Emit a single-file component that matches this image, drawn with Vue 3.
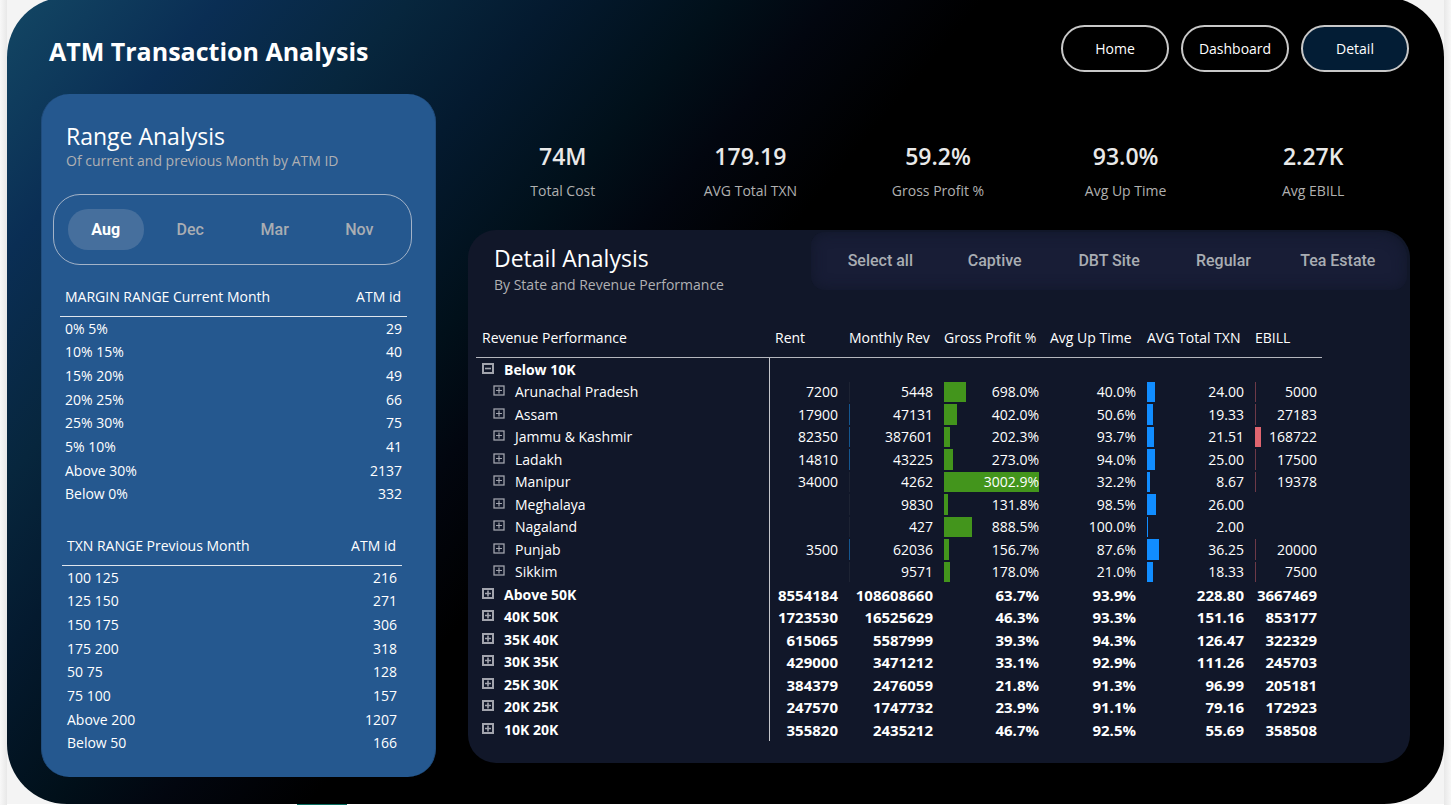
<script setup>
import { ref } from 'vue'

const pages = ['Home', 'Dashboard', 'Detail']
const activePage = ref('Detail')

const months = ['Aug', 'Dec', 'Mar', 'Nov']
const activeMonth = ref('Aug')

const siteTypes = ['Select all', 'Captive', 'DBT Site', 'Regular', 'Tea Estate']

const kpis = [
  { value: '74M', label: 'Total Cost' },
  { value: '179.19', label: 'AVG Total TXN' },
  { value: '59.2%', label: 'Gross Profit %' },
  { value: '93.0%', label: 'Avg Up Time' },
  { value: '2.27K', label: 'Avg EBILL' }
]

const rangeTables = [
  {
    id: 'margin',
    title: 'MARGIN RANGE Current Month',
    rows: [
      ['0% 5%', 29],
      ['10% 15%', 40],
      ['15% 20%', 49],
      ['20% 25%', 66],
      ['25% 30%', 75],
      ['5% 10%', 41],
      ['Above 30%', 2137],
      ['Below 0%', 332]
    ]
  },
  {
    id: 'txn',
    title: 'TXN RANGE Previous Month',
    rows: [
      ['100 125', 216],
      ['125 150', 271],
      ['150 175', 306],
      ['175 200', 318],
      ['50 75', 128],
      ['75 100', 157],
      ['Above 200', 1207],
      ['Below 50', 166]
    ]
  }
]

const columns = ['Rent', 'Monthly Rev', 'Gross Profit %', 'Avg Up Time', 'AVG Total TXN', 'EBILL']

const state = (name, ...cells) => ({ name, cells, child: true })
const group = (name, ...cells) => ({ name, cells, child: false })

const matrix = [
  { ...group('Below 10K', '', '', '', '', '', ''), open: true },
  state('Arunachal Pradesh', '7200', '5448', '698.0%', '40.0%', '24.00', '5000'),
  state('Assam', '17900', '47131', '402.0%', '50.6%', '19.33', '27183'),
  state('Jammu & Kashmir', '82350', '387601', '202.3%', '93.7%', '21.51', '168722'),
  state('Ladakh', '14810', '43225', '273.0%', '94.0%', '25.00', '17500'),
  state('Manipur', '34000', '4262', '3002.9%', '32.2%', '8.67', '19378'),
  state('Meghalaya', '', '9830', '131.8%', '98.5%', '26.00', ''),
  state('Nagaland', '', '427', '888.5%', '100.0%', '2.00', ''),
  state('Punjab', '3500', '62036', '156.7%', '87.6%', '36.25', '20000'),
  state('Sikkim', '', '9571', '178.0%', '21.0%', '18.33', '7500'),
  group('Above 50K', '8554184', '108608660', '63.7%', '93.9%', '228.80', '3667469'),
  group('40K 50K', '1723530', '16525629', '46.3%', '93.3%', '151.16', '853177'),
  group('35K 40K', '615065', '5587999', '39.3%', '94.3%', '126.47', '322329'),
  group('30K 35K', '429000', '3471212', '33.1%', '92.9%', '111.26', '245703'),
  group('25K 30K', '384379', '2476059', '21.8%', '91.3%', '96.99', '205181'),
  group('20K 25K', '247570', '1747732', '23.9%', '91.1%', '79.16', '172923'),
  group('10K 20K', '355820', '2435212', '46.7%', '92.5%', '55.69', '358508')
]

// Data bars: column index -> colour class and pixels per unit
const bars = {
  1: { tone: 'rev', scale: 1 / 45000 },
  2: { tone: 'profit', scale: 95 / 3002.9 },
  4: { tone: 'txn', scale: 1 / 3 },
  5: { tone: 'ebill', scale: 6 / 168722 }
}

function bar(row, index) {
  const spec = bars[index]
  const text = row.cells[index]
  if (!spec || !row.child || !text) return null
  const width = Math.round(parseFloat(text) * spec.scale)
  return { tone: spec.tone, width, empty: width < 1, thin: width < 2 }
}
</script>

<template>
  <div class="page">
    <main class="report">
      <header class="top">
        <h1>ATM Transaction Analysis</h1>
        <nav class="nav" aria-label="Report pages">
          <button
            v-for="p in pages"
            :key="p"
            type="button"
            :class="{ active: p === activePage }"
            @click="activePage = p"
          >{{ p }}</button>
        </nav>
      </header>

      <div class="body">
        <section class="range">
          <div class="heading">
            <h2>Range Analysis</h2>
            <p>Of current and previous Month by ATM ID</p>
          </div>
          <div class="months" role="group" aria-label="Month">
            <button
              v-for="m in months"
              :key="m"
              type="button"
              :class="{ active: m === activeMonth }"
              @click="activeMonth = m"
            >{{ m }}</button>
          </div>
          <table v-for="t in rangeTables" :key="t.id" :class="['list', t.id]">
            <thead>
              <tr><th scope="col">{{ t.title }}</th><th scope="col">ATM id</th></tr>
            </thead>
            <tbody>
              <tr v-for="r in t.rows" :key="r[0]"><td>{{ r[0] }}</td><td>{{ r[1] }}</td></tr>
            </tbody>
          </table>
        </section>

        <div class="main">
          <dl class="kpis">
            <div v-for="k in kpis" :key="k.label">
              <dd>{{ k.value }}</dd>
              <dt>{{ k.label }}</dt>
            </div>
          </dl>

          <section class="detail">
            <div class="detail-top">
              <div class="heading">
                <h2>Detail Analysis</h2>
                <p>By State and Revenue Performance</p>
              </div>
              <div class="sites" role="group" aria-label="Site type">
                <button v-for="s in siteTypes" :key="s" type="button">{{ s }}</button>
              </div>
            </div>

            <table class="matrix">
              <colgroup>
                <col />
                <col class="w-rent" />
                <col class="w-rev" />
                <col class="w-profit" />
                <col class="w-up" />
                <col class="w-txn" />
                <col class="w-ebill" />
              </colgroup>
              <thead>
                <tr>
                  <th scope="col">Revenue Performance</th>
                  <th v-for="c in columns" :key="c" scope="col">{{ c }}</th>
                </tr>
              </thead>
              <tbody>
                <tr v-for="row in matrix" :key="row.name" :class="{ group: !row.child }">
                  <th scope="row">
                    <span :class="['label', { child: row.child }]">
                      <button type="button" class="toggle" :aria-label="(row.open ? 'Collapse ' : 'Expand ') + row.name">
                        <svg viewBox="0 0 12 12" width="12" height="12" aria-hidden="true">
                          <rect x="1" y="1" width="10" height="9" fill="none" stroke="currentColor" :stroke-width="row.child ? 1.3 : 2" />
                          <path :d="row.open ? 'M3 5.5h6' : 'M3 5.5h6M6 2.5v6'" stroke="currentColor" :stroke-width="row.child ? 1.2 : 1.6" />
                        </svg>
                      </button>
                      {{ row.name }}
                    </span>
                  </th>
                  <td v-for="(c, i) in row.cells" :key="i">
                    <span
                      v-if="bar(row, i)"
                      :class="['bar', bar(row, i).tone, { empty: bar(row, i).empty, thin: bar(row, i).thin }]"
                      :style="{ width: bar(row, i).width + 'px' }"
                    ></span>
                    <span class="num">{{ c }}</span>
                  </td>
                </tr>
              </tbody>
            </table>
          </section>
        </div>
      </div>
    </main>
    <div class="tabs"><span></span></div>
  </div>
</template>

<style>
body {
  margin: 0;
  background: #f4f4f4;
}
</style>

<style scoped>
.page {
  min-height: 100vh;
  padding: 0 7px;
  box-sizing: border-box;
  display: flex;
  flex-direction: column;
  overflow: hidden;
  background: linear-gradient(90deg, #f8f8f8, #e8e8e8 7px, #f4f4f4 7px, #f4f4f4 calc(100% - 7px), #e8e8e8 calc(100% - 7px), #f8f8f8);
  font-family: "Open Sans", "Noto Sans", sans-serif;
  font-size: 14px;
  line-height: 20px;
  color: #fff;
}

.report {
  flex: 1;
  margin-top: -3px;
  padding: 28px 34px 27px;
  border-radius: 60px;
  background: linear-gradient(130deg, #134764 0, #0a2e54 165px, #07263d 310px, #041a2f 420px, #01101a 550px, #02060f 635px, #000 750px);
}

h1,
h2,
p,
dl,
dd {
  margin: 0;
}

button {
  margin: 0;
  padding: 0;
  border: 0;
  background: none;
  color: inherit;
  font: inherit;
  cursor: pointer;
}

.top {
  display: flex;
  justify-content: space-between;
  align-items: center;
  padding: 0 1px 0 8px;
}

h1 {
  padding-top: 4px;
  font-size: 25px;
  line-height: 36px;
  font-weight: 700;
}

.nav {
  display: flex;
  gap: 12px;
}

.nav button {
  width: 108px;
  height: 47px;
  box-sizing: border-box;
  border: 2px solid #c8c8c8;
  border-radius: 24px;
  background: #000;
}

.nav button.active {
  background: #031d35;
}

.body {
  display: grid;
  grid-template-columns: 395fr 942fr;
  gap: 32px;
  margin-top: 22px;
}

.range {
  box-sizing: border-box;
  padding: 27px 23px 22px 11px;
  border: 1px solid #204c7c;
  border-width: 0 1px;
  border-radius: 28px;
  background: #25588f;
}

.heading h2 {
  font-size: 23px;
  line-height: 30px;
  font-weight: 400;
}

.heading p {
  color: #b0b0b3;
}

.range .heading {
  padding-left: 13px;
}

.months {
  display: grid;
  grid-template-columns: repeat(4, 1fr);
  align-items: center;
  gap: 9px;
  height: 71px;
  margin-top: 23px;
  padding: 0 14px;
  box-sizing: border-box;
  border: 1px solid #a3b3c8;
  border-radius: 27px;
}

.months button,
.sites button {
  font: 500 16px/20px Roboto, sans-serif;
  color: #a9adb3;
}

.months button {
  height: 41px;
  border-radius: 20px;
}

.months button.active {
  background: #466f9d;
  color: #fff;
  font-weight: 700;
}

table {
  border-collapse: separate;
  border-spacing: 0;
  table-layout: fixed;
}

th {
  font-weight: 400;
  text-align: left;
}

th,
td {
  padding: 0;
  white-space: nowrap;
}

.list {
  width: calc(100% - 12px);
  margin: 16px 5px 0 7px;
}

.list.txn {
  width: calc(100% - 19px);
  margin: 24px 10px 0 9px;
}

.list th,
.list td {
  padding: 0 5px;
}

.list th {
  height: 36px;
  padding: 0 6px 3px 5px;
  box-sizing: border-box;
  border-bottom: 1px solid #dfe5ec;
}

.list th:first-child {
  width: 70%;
}

.list th:last-child,
.list td:last-child {
  text-align: right;
}

.list td {
  height: 24px;
}

.list tr:nth-child(3n + 1) td {
  height: 23px;
}

.kpis {
  display: grid;
  grid-template-columns: repeat(5, 1fr);
  height: 136px;
  box-sizing: border-box;
  padding: 45px 3px 0 1px;
  text-align: center;
}

.kpis dd {
  font-size: 23px;
  line-height: 34px;
  font-weight: 600;
  color: #e9e9e9;
}

.kpis dt {
  margin-top: 8px;
  color: #b0b0b0;
}

.detail {
  box-sizing: border-box;
  padding: 2px 3px 22px 8px;
  border-radius: 28px;
  background: #111729;
}

.detail-top {
  display: flex;
  justify-content: space-between;
}

.detail .heading {
  padding: 11px 0 0 18px;
}

.detail .heading p {
  margin-top: 2px;
}

.sites {
  display: grid;
  grid-template-columns: repeat(5, 1fr);
  width: 64%;
  height: 58px;
  padding: 0 12px;
  box-sizing: border-box;
  border-radius: 14px 26px 14px 14px;
  background: #181d36;
  box-shadow: inset 0 0 14px #111729;
}

.matrix {
  width: calc(100% - 85px);
  margin-top: 27px;
}

.w-rent { width: 74px; }
.w-rev { width: 95px; }
.w-profit { width: 106px; }
.w-up { width: 97px; }
.w-txn { width: 108px; }
.w-ebill { width: 72px; }

.matrix thead th {
  height: 36px;
  padding: 0 0 3px 6px;
  box-sizing: border-box;
  border-bottom: 1px solid #b5b7be;
}

.matrix thead th:not(:first-child) {
  padding-left: 5px;
}

.matrix tbody th,
.matrix tbody td {
  height: 22px;
}

.matrix tbody tr:nth-child(odd) > * {
  height: 23px;
}

.matrix tbody th {
  border-right: 1px solid #c4c6cb;
}

.matrix tbody td {
  position: relative;
  padding: 0 6px 0 5px;
  text-align: right;
}

.matrix tbody td:last-child {
  padding-right: 5px;
}

.matrix .group > * {
  font-weight: 700;
}

.matrix .group > td {
  font-size: 15px;
}

.num {
  position: relative;
}

.label {
  display: flex;
  align-items: center;
  gap: 10px;
  padding-left: 6px;
}

.label.child {
  padding-left: 17px;
}

.toggle {
  display: flex;
  padding-bottom: 2px;
  color: #a2a4ad;
}

.bar {
  position: absolute;
  left: 5px;
  top: 1px;
  bottom: 1px;
  min-width: 1px;
}

.bar.profit { background: #43951c; }
.bar.txn { background: #118dff; }
.bar.rev { background: #14568f; max-width: 1px; }
.bar.ebill { background: #e0656f; }
.bar.rev.empty { background: #1d2333; }
.bar.ebill.thin { background: #6d3947; }

.tabs {
  height: 1px;
  background: #fff;
}

.tabs span {
  display: block;
  width: 50px;
  height: 1px;
  margin-left: 290px;
  background: #0b6e62;
}
</style>
